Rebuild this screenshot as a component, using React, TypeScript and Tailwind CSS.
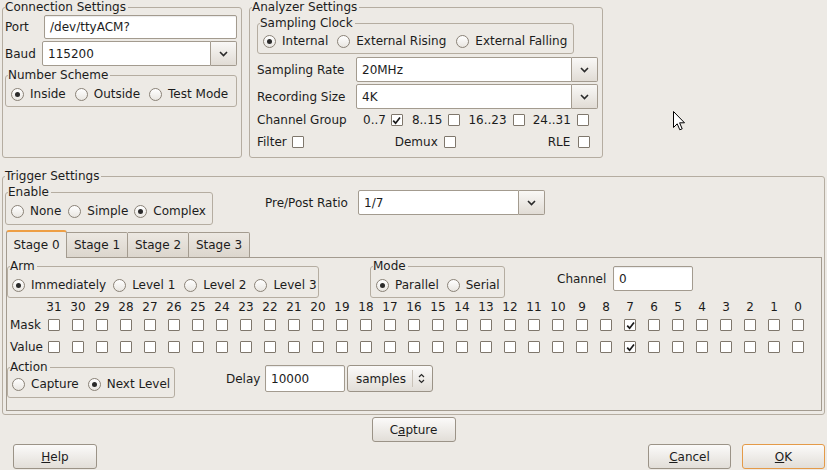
import React from 'react';

const bits = Array.from({ length: 32 }, (_, i) => 31 - i);

function Group({ title, className, children }: { title: string; className?: string; children?: React.ReactNode }) {
  return (
    <fieldset className={`border border-[#b5ada1] rounded-[3px] px-[2px] min-w-0 ${className ?? ''}`}>
      <legend className="leading-[14px] pr-[2px]">{title}</legend>
      {children}
    </fieldset>
  );
}

function Radio({ label, checked, className }: { label: string; checked?: boolean; className?: string }) {
  return (
    <div className={`flex items-center ${className ?? ''}`}>
      <span className="w-[13px] h-[13px] rounded-full border border-[#8a8277] bg-linear-to-b from-white to-[#e9e6e1] flex items-center justify-center shrink-0">
        {checked && <span className="w-[5px] h-[5px] rounded-full bg-[#2a2a2a]" />}
      </span>
      <span className="ml-[6px] whitespace-nowrap">{label}</span>
    </div>
  );
}

function Check({ checked, className }: { checked?: boolean; className?: string }) {
  return (
    <span className={`w-[12px] h-[12px] border border-[#7f776c] bg-white rounded-[1px] flex items-center justify-center shrink-0 ${className ?? ''}`}>
      {checked && (
        <svg width="9" height="9" viewBox="0 0 9 9">
          <path d="M1.2 4.6 L3.6 7.2 L8 1.4" stroke="#1a1a1a" strokeWidth="1.7" fill="none" />
        </svg>
      )}
    </span>
  );
}

function TextField({ value, className }: { value: string; className?: string }) {
  return (
    <div className={`border border-[#a39b8f] rounded-[2px] bg-white flex items-center pl-[5px] shadow-[inset_0_1px_1px_rgba(0,0,0,0.08)] ${className ?? ''}`}>
      {value}
    </div>
  );
}

function Chevron() {
  return (
    <svg width="9" height="6" viewBox="0 0 9 6">
      <path d="M1 1 L4.5 4.5 L8 1" stroke="#2a2a2a" strokeWidth="1.6" fill="none" />
    </svg>
  );
}

function Combo({ value, className }: { value: string; className?: string }) {
  return (
    <div className={`flex h-[25px] ${className ?? ''}`}>
      <div className="flex-1 border border-[#a39b8f] rounded-l-[2px] bg-white flex items-center pl-[5px]">{value}</div>
      <div className="w-[26px] border border-l-0 border-[#a39b8f] rounded-r-[2px] bg-linear-to-b from-[#f9f8f6] to-[#e1dcd5] flex items-center justify-center">
        <Chevron />
      </div>
    </div>
  );
}

function Button({ children, className }: { children: React.ReactNode; className?: string }) {
  return (
    <div className={`h-[25px] border rounded-[3px] bg-linear-to-b from-[#fbfaf9] to-[#e2ded8] flex items-center justify-center ${className ?? 'border-[#9b9387]'}`}>
      {children}
    </div>
  );
}

export default function App() {
  return (
    <div className="w-[827px] h-[470px] bg-[#edeae5] text-[12px] leading-[14px] text-[#1c1c1c] font-['DejaVu_Sans',sans-serif] relative overflow-hidden">
      {/* top row */}
      <div className="flex pl-[2px]">
        <Group title="Connection Settings" className="w-[240px] h-[158px]">
          <div className="flex items-center mt-[1px]">
            <span className="w-[39px]">Port</span>
            <TextField value="/dev/ttyACM?" className="w-[193px] h-[24px]" />
          </div>
          <div className="flex items-center mt-[2px]">
            <span className="w-[37px]">Baud</span>
            <Combo value="115200" className="w-[195px]" />
          </div>
          <Group title="Number Scheme" className="w-[232px] h-[39px] mt-[2px]">
            <div className="flex items-center h-[20px] mt-[2px] ml-[3px]">
              <Radio label="Inside" checked />
              <Radio label="Outside" className="ml-[9px]" />
              <Radio label="Test Mode" className="ml-[9px]" />
            </div>
          </Group>
        </Group>

        <Group title="Analyzer Settings" className="w-[354px] h-[158px] ml-[7px]">
          <Group title="Sampling Clock" className="w-[317px] h-[38px] ml-[5px] mt-[2px]">
            <div className="flex items-center h-[20px] mt-[1px] ml-[3px]">
              <Radio label="Internal" checked />
              <Radio label="External Rising" className="ml-[9px]" />
              <Radio label="External Falling" className="ml-[10px]" />
            </div>
          </Group>
          <div className="flex items-center mt-[3px] ml-[5px]">
            <span className="w-[99px]">Sampling Rate</span>
            <Combo value="20MHz" className="w-[242px]" />
          </div>
          <div className="flex items-center mt-[2px] ml-[5px]">
            <span className="w-[99px]">Recording Size</span>
            <Combo value="4K" className="w-[242px]" />
          </div>
          <div className="flex items-center h-[20px] mt-[1px] ml-[5px]">
            <span className="w-[106px]">Channel Group</span>
            <span>0..7</span>
            <Check checked className="ml-[5px]" />
            <span className="ml-[9px]">8..15</span>
            <Check className="ml-[6px]" />
            <span className="ml-[8px]">16..23</span>
            <Check className="ml-[6px]" />
            <span className="ml-[8px]">24..31</span>
            <Check className="ml-[6px]" />
          </div>
          <div className="flex items-center h-[20px] mt-[2px] ml-[5px]">
            <span>Filter</span>
            <Check className="ml-[5px]" />
            <span className="ml-[91px]">Demux</span>
            <Check className="ml-[6px]" />
            <span className="ml-[92px]">RLE</span>
            <Check className="ml-[8px]" />
          </div>
        </Group>
      </div>

      {/* trigger settings */}
      <Group title="Trigger Settings" className="w-[823px] h-[246px] ml-[2px] mt-[11px]">
        <div className="flex items-start">
          <Group title="Enable" className="w-[208px] h-[40px] mt-[2px]">
            <div className="flex items-center h-[20px] mt-[2px] ml-[3px]">
              <Radio label="None" />
              <Radio label="Simple" className="ml-[7px]" />
              <Radio label="Complex" className="ml-[6px]" checked />
            </div>
          </Group>
          <div className="flex items-center mt-[7px] ml-[52px]">
            <span className="w-[93px]">Pre/Post Ratio</span>
            <Combo value="1/7" className="w-[187px]" />
          </div>
        </div>

        <div className="flex items-end h-[28px] mt-[5px] ml-[1px] relative z-10">
          <div className="h-[28px] w-[61px] border border-b-0 border-[#a39b8f] border-t-2 border-t-[#ee9f45] rounded-t-[3px] bg-[#edeae5] flex items-center justify-center">
            Stage 0
          </div>
          {['Stage 1', 'Stage 2', 'Stage 3'].map((t) => (
            <div
              key={t}
              className="h-[26px] w-[61px] border border-l-0 border-[#a39b8f] rounded-tr-[2px] bg-linear-to-b from-[#ece8e2] to-[#dcd6cd] flex items-center justify-center"
            >
              {t}
            </div>
          ))}
        </div>

        <div className="w-[816px] h-[154px] ml-[1px] -mt-[1px] border border-[#a39b8f]">
          <div className="flex items-start">
            <Group title="Arm" className="w-[312px] h-[39px] mt-[1px]">
              <div className="flex items-center h-[20px] mt-[2px] ml-[2px]">
                <Radio label="Immediately" checked />
                <Radio label="Level 1" className="ml-[7px]" />
                <Radio label="Level 2" className="ml-[9px]" />
                <Radio label="Level 3" className="ml-[8px]" />
              </div>
            </Group>
            <Group title="Mode" className="w-[135px] h-[39px] mt-[1px] ml-[51px]">
              <div className="flex items-center h-[20px] mt-[2px] ml-[3px]">
                <Radio label="Parallel" checked />
                <Radio label="Serial" className="ml-[8px]" />
              </div>
            </Group>
            <div className="flex items-center mt-[8px] ml-[52px]">
              <span className="w-[56px]">Channel</span>
              <TextField value="0" className="w-[80px] h-[25px]" />
            </div>
          </div>

          <div className="flex items-center h-[16px] mt-[1px]">
            <div className="w-[35px]" />
            {bits.map((b) => (
              <div key={b} className="w-[24px] text-center">{b}</div>
            ))}
          </div>
          <div className="flex items-center h-[20px]">
            <div className="w-[35px] pl-[3px]">Mask</div>
            {bits.map((b) => (
              <div key={b} className="w-[24px] flex justify-center">
                <Check checked={b === 7} />
              </div>
            ))}
          </div>
          <div className="flex items-center h-[20px] mt-[2px]">
            <div className="w-[35px] pl-[3px]">Value</div>
            {bits.map((b) => (
              <div key={b} className="w-[24px] flex justify-center">
                <Check checked={b === 7} />
              </div>
            ))}
          </div>

          <div className="flex items-start mt-[3px]">
            <Group title="Action" className="w-[168px] h-[38px]">
              <div className="flex items-center h-[20px] ml-[2px]">
                <Radio label="Capture" />
                <Radio label="Next Level" className="ml-[9px]" checked />
              </div>
            </Group>
            <div className="flex items-center mt-[5px] ml-[51px]">
              <span className="w-[39px]">Delay</span>
              <TextField value="10000" className="w-[80px] h-[27px]" />
              <div className="ml-[2px] w-[86px] h-[27px] border border-[#9b9387] rounded-[3px] bg-linear-to-b from-[#fbfaf9] to-[#e2ded8] flex items-center">
                <span className="pl-[8px] w-[64px]">samples</span>
                <span className="w-px h-[17px] bg-[#c9c2b8]" />
                <svg className="ml-[5px]" width="7" height="11" viewBox="0 0 7 11">
                  <path d="M1 4 L3.5 1.5 L6 4 M1 7 L3.5 9.5 L6 7" stroke="#2a2a2a" strokeWidth="1.2" fill="none" />
                </svg>
              </div>
            </div>
          </div>
        </div>
      </Group>

      {/* buttons */}
      <div className="flex justify-center mt-[2px]">
        <Button className="w-[84px] border-[#9b9387]">
          <span>C<span className="underline">a</span>pture</span>
        </Button>
      </div>
      <div className="flex mt-[2px] pl-[13px] pr-[2px]">
        <Button className="w-[84px] border-[#9b9387]">
          <span><span className="underline">H</span>elp</span>
        </Button>
        <Button className="w-[83px] ml-auto border-[#9b9387]">
          <span><span className="underline">C</span>ancel</span>
        </Button>
        <Button className="w-[83px] ml-[11px] border-[#e49a48]">
          <span><span className="underline">O</span>K</span>
        </Button>
      </div>

      <svg className="absolute left-[673px] top-[111px]" width="13" height="21" viewBox="0 0 13 21">
        <path d="M0.5 0.5 L0.5 16.5 L4.2 12.8 L6.8 18.8 L9.2 17.8 L6.6 11.8 L11.5 11.8 Z" fill="white" stroke="black" strokeWidth="1" />
      </svg>
    </div>
  );
}
